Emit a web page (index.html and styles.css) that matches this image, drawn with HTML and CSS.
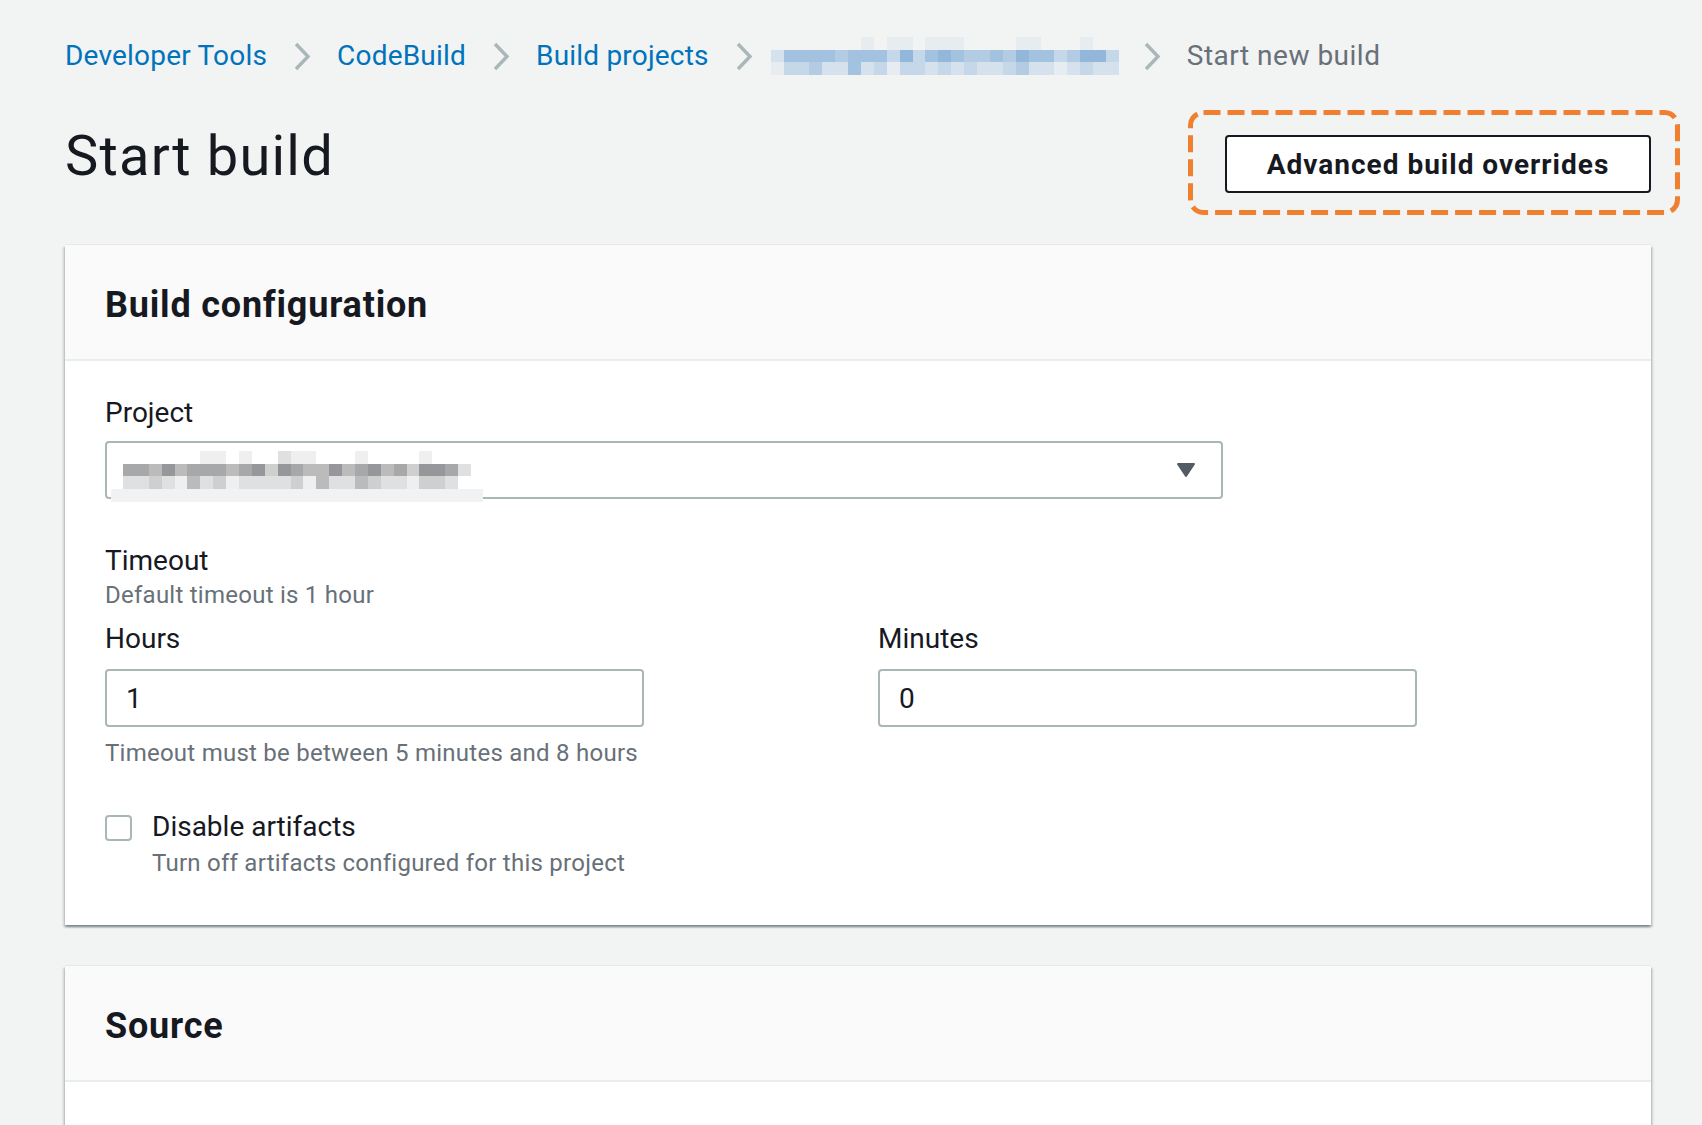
FILE: index.html
```html
<!DOCTYPE html>
<html lang="en">
<head>
<meta charset="utf-8">
<title>Start build</title>
<link rel="stylesheet" href="styles.css">
</head>
<body>
<div class="page">
  <nav class="crumbs">
    <a class="crumb link">Developer Tools</a>
    <svg class="chev" viewBox="0 0 18 29"><polyline points="3,2 15,14.5 3,27"/></svg>
    <a class="crumb link">CodeBuild</a>
    <svg class="chev" viewBox="0 0 18 29"><polyline points="3,2 15,14.5 3,27"/></svg>
    <a class="crumb link">Build projects</a>
    <svg class="chev" viewBox="0 0 18 29"><polyline points="3,2 15,14.5 3,27"/></svg>
    <span class="blur blue">
      <i class="p0"></i><i class="p0"></i><i class="p0"></i><i class="p0"></i><i class="p0"></i><i class="p0"></i><i class="p0"></i><i class="p1"></i><i class="p0"></i><i class="p1"></i><i class="p1"></i><i class="p0"></i><i class="p1"></i><i class="p1"></i><i class="p1"></i><i class="p0"></i><i class="p0"></i><i class="p0"></i><i class="p0"></i><i class="p1"></i><i class="p1"></i><i class="p0"></i><i class="p0"></i><i class="p0"></i><i class="p1"></i><i class="p0"></i><i class="p0"></i>
      <i class="p2"></i><i class="p5"></i><i class="p5"></i><i class="p5"></i><i class="p5"></i><i class="p4"></i><i class="p5"></i><i class="p5"></i><i class="p5"></i><i class="p3"></i><i class="p6"></i><i class="p3"></i><i class="p5"></i><i class="p6"></i><i class="p5"></i><i class="p4"></i><i class="p4"></i><i class="p5"></i><i class="p4"></i><i class="p6"></i><i class="p5"></i><i class="p5"></i><i class="p3"></i><i class="p4"></i><i class="p6"></i><i class="p6"></i><i class="p3"></i>
      <i class="p1"></i><i class="p3"></i><i class="p3"></i><i class="p4"></i><i class="p2"></i><i class="p2"></i><i class="p5"></i><i class="p2"></i><i class="p3"></i><i class="p1"></i><i class="p3"></i><i class="p3"></i><i class="p2"></i><i class="p3"></i><i class="p2"></i><i class="p3"></i><i class="p2"></i><i class="p2"></i><i class="p3"></i><i class="p4"></i><i class="p2"></i><i class="p2"></i><i class="p1"></i><i class="p2"></i><i class="p3"></i><i class="p2"></i><i class="p2"></i>
    </span>
    <svg class="chev" viewBox="0 0 18 29"><polyline points="3,2 15,14.5 3,27"/></svg>
    <span class="crumb current">Start new build</span>
  </nav>

  <header class="head">
    <h1 class="title">Start build</h1>
    <div class="btn-wrap">
      <button class="btn">Advanced build overrides</button>
      <svg class="highlight" viewBox="0 0 492 105"><rect x="2.5" y="2.5" width="487" height="100" rx="13" ry="13"/></svg>
    </div>
  </header>

  <section class="card">
    <div class="card-head"><h2 class="card-title">Build configuration</h2></div>
    <div class="card-body">
      <div class="field">
        <div class="label">Project</div>
        <div class="select">
          <span class="blur gray">
            <i class="p0"></i><i class="p0"></i><i class="p0"></i><i class="p0"></i><i class="p0"></i><i class="p0"></i><i class="p1"></i><i class="p1"></i><i class="p0"></i><i class="p1"></i><i class="p0"></i><i class="p0"></i><i class="p2"></i><i class="p1"></i><i class="p1"></i><i class="p0"></i><i class="p0"></i><i class="p0"></i><i class="p1"></i><i class="p0"></i><i class="p0"></i><i class="p0"></i><i class="p0"></i><i class="p1"></i><i class="p0"></i><i class="p0"></i><i class="p0"></i>
            <i class="p5"></i><i class="p5"></i><i class="p4"></i><i class="p6"></i><i class="p4"></i><i class="p5"></i><i class="p5"></i><i class="p5"></i><i class="p4"></i><i class="p5"></i><i class="p6"></i><i class="p3"></i><i class="p6"></i><i class="p5"></i><i class="p4"></i><i class="p4"></i><i class="p6"></i><i class="p4"></i><i class="p5"></i><i class="p6"></i><i class="p4"></i><i class="p5"></i><i class="p3"></i><i class="p6"></i><i class="p6"></i><i class="p5"></i><i class="p2"></i>
            <i class="p2"></i><i class="p2"></i><i class="p3"></i><i class="p2"></i><i class="p1"></i><i class="p4"></i><i class="p2"></i><i class="p3"></i><i class="p1"></i><i class="p2"></i><i class="p2"></i><i class="p2"></i><i class="p2"></i><i class="p3"></i><i class="p1"></i><i class="p4"></i><i class="p2"></i><i class="p2"></i><i class="p4"></i><i class="p3"></i><i class="p2"></i><i class="p2"></i><i class="p1"></i><i class="p3"></i><i class="p3"></i><i class="p2"></i><i class="p0"></i>
          </span>
          <svg class="caret" viewBox="0 0 20 16"><path d="M2 2 H18 L10 14 Z"/></svg>
          <span class="strip"></span>
        </div>
      </div>

      <div class="timeout">
        <div class="label">Timeout</div>
        <div class="desc first">Default timeout is 1 hour</div>
        <div class="cols">
          <div class="col">
            <div class="label">Hours</div>
            <div class="input">1</div>
            <div class="hint">Timeout must be between 5 minutes and 8 hours</div>
          </div>
          <div class="col">
            <div class="label">Minutes</div>
            <div class="input">0</div>
          </div>
        </div>
      </div>

      <div class="check">
        <span class="box"></span>
        <div class="check-text">
          <div class="label">Disable artifacts</div>
          <div class="desc">Turn off artifacts configured for this project</div>
        </div>
      </div>
    </div>
  </section>

  <section class="card card2">
    <div class="card-head"><h2 class="card-title">Source</h2></div>
    <div class="card-body empty"></div>
  </section>
</div>
</body>
</html>
```

FILE: styles.css
```css
html, body {
  margin: 0;
  height: 100%;
  overflow: hidden;
  background: #f2f3f3;
}

body {
  font-family: Roboto, "Noto Sans", Arial, sans-serif;
  color: #16191f;
}

.page {
  padding: 36px 51px 0 65px;
}

/* breadcrumbs */
.crumbs {
  display: flex;
  align-items: center;
  height: 40px;
  font-size: 28px;
  line-height: 40px;
  letter-spacing: 0.2px;
}

.crumb.link {
  color: #0073bb;
  text-decoration: none;
}

.crumb.current {
  color: #687078;
  letter-spacing: 0.5px;
}

.chev {
  width: 18px;
  height: 29px;
  margin: 0 26px;
  flex: none;
}

.chev polyline {
  fill: none;
  stroke: #aab7b8;
  stroke-width: 3.4;
}

/* pixelated blur blocks */
.blur {
  display: grid;
  grid-template-columns: repeat(27, 12.9px);
  grid-template-rows: repeat(3, 12.7px);
  flex: none;
}

.crumbs .blur {
  margin-left: -8px;
  margin-right: -2px;
}

.blur i {
  display: block;
}

.blue .p0 { background: transparent; }
.blue .p1 { background: #e7ecf0; }
.blue .p2 { background: #d5e2ee; }
.blue .p3 { background: #c5d8e9; }
.blue .p4 { background: #b3cce3; }
.blue .p5 { background: #a3c2df; }
.blue .p6 { background: #92b7da; }

.gray .p0 { background: transparent; }
.gray .p1 { background: #efefef; }
.gray .p2 { background: #e0e0e1; }
.gray .p3 { background: #cfcfd0; }
.gray .p4 { background: #bbbbbc; }
.gray .p5 { background: #a7a8a9; }
.gray .p6 { background: #96979a; }

/* page header */
.head {
  display: flex;
  justify-content: space-between;
  align-items: flex-start;
  margin-top: 48px;
}

.title {
  margin: 0;
  font-size: 56px;
  line-height: 64px;
  font-weight: 400;
  letter-spacing: 1.2px;
  color: #16191f;
}

.btn-wrap {
  position: relative;
  margin-top: 11px;
}

.btn {
  display: block;
  box-sizing: border-box;
  width: 426px;
  height: 58px;
  border: 2px solid #16191f;
  border-radius: 4px;
  background: #ffffff;
  color: #16191f;
  font-family: Roboto, "Noto Sans", Arial, sans-serif;
  font-size: 28px;
  font-weight: 700;
  letter-spacing: 1px;
  padding: 0;
}

.highlight {
  position: absolute;
  left: -37px;
  top: -25px;
  width: 492px;
  height: 105px;
  overflow: visible;
}

.highlight rect {
  fill: none;
  stroke: #ef7f31;
  stroke-width: 5;
  stroke-dasharray: 17 7;
}

/* cards */
.card {
  margin-top: 52px;
  background: #ffffff;
  box-shadow: 0 -1px 0 0 #e6e9e9, 0 2px 2px 0 rgba(0, 28, 36, 0.35), 2px 2px 2px 0 rgba(0, 28, 36, 0.12), -2px 2px 2px 0 rgba(0, 28, 36, 0.12);
}

.card2 {
  margin-top: 41px;
}

.card-head {
  background: #fafafa;
  border-bottom: 2px solid #eaeded;
  padding: 38px 40px 32px;
}

.card-title {
  margin: 0;
  font-size: 36px;
  line-height: 44px;
  font-weight: 700;
  letter-spacing: 0.8px;
  color: #16191f;
}

.card-body {
  padding: 32px 40px 46px;
}

.card-body.empty {
  height: 120px;
  padding: 0;
}

.label {
  font-size: 28px;
  line-height: 40px;
  color: #16191f;
}

.field .label {
  margin-bottom: 8px;
}

.col .label {
  margin-bottom: 10px;
}

.desc,
.hint {
  font-size: 24px;
  line-height: 32px;
  letter-spacing: 0.25px;
  color: #687078;
}

.desc.first {
  margin-top: -2px;
}

.hint {
  margin-top: 10px;
}

.select {
  position: relative;
  box-sizing: border-box;
  width: 1118px;
  height: 58px;
  border: 2px solid #aab7b8;
  border-radius: 4px;
  display: flex;
  align-items: center;
  justify-content: space-between;
  padding: 0 25px 0 16px;
}

.caret {
  width: 20px;
  height: 16px;
  flex: none;
}

.caret path {
  fill: #545b64;
  stroke: #545b64;
  stroke-width: 2;
  stroke-linejoin: round;
}

.strip {
  position: absolute;
  left: 4px;
  bottom: -5px;
  width: 372px;
  height: 13px;
  background: #f1f2f3;
}

.timeout {
  margin-top: 42px;
}

.cols {
  display: grid;
  grid-template-columns: 1fr 1fr;
  column-gap: 40px;
  margin-top: 8px;
}

.input {
  box-sizing: border-box;
  width: 539px;
  height: 58px;
  border: 2px solid #aab7b8;
  border-radius: 4px;
  padding-left: 19px;
  font-size: 28px;
  line-height: 56px;
  color: #16191f;
}

.check {
  display: flex;
  align-items: flex-start;
  gap: 20px;
  margin-top: 38px;
}

.box {
  box-sizing: border-box;
  width: 27px;
  height: 26px;
  margin-top: 8px;
  border: 2px solid #aab7b8;
  border-radius: 4px;
  background: #ffffff;
  flex: none;
}
```
